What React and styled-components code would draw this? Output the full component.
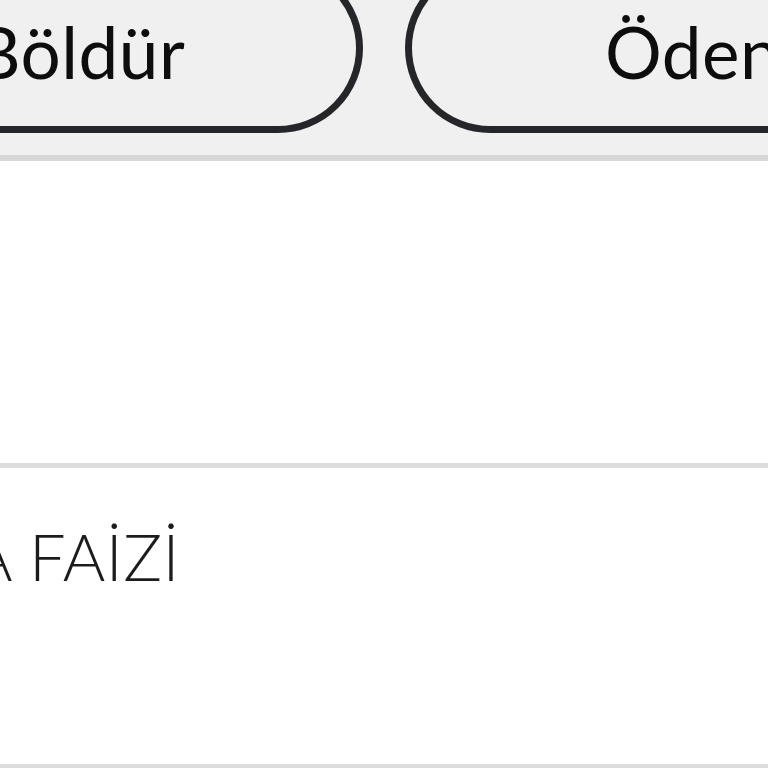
import React from "react";
import styled, { createGlobalStyle } from "styled-components";

const Global = createGlobalStyle`
  html, body { margin: 0; padding: 0; background: #ffffff; overflow: hidden; }
  body { font-family: "Lato", "Noto Sans", sans-serif; }
`;

const Page = styled.div`
  width: 768px;
  height: 768px;
  overflow: hidden;
  display: flex;
  flex-direction: column;
  background: #ffffff;
`;

const Toolbar = styled.div`
  height: 155px;
  flex-shrink: 0;
  background: #f0f0f0;
  border-bottom: 6px solid #d7d7d7;
  display: flex;
  justify-content: center;
  align-items: flex-start;
  gap: 42px;
  overflow: hidden;
`;

const PillButton = styled.button`
  flex-shrink: 0;
  width: 566px;
  height: 170px;
  margin-top: -37px;
  box-sizing: border-box;
  border: 7px solid #25262a;
  border-radius: 999px;
  background: #f0f0f0;
  color: #0d0d0d;
  font-family: "Lato", "Noto Sans", sans-serif;
  font-size: 71px;
  font-weight: 400;
  letter-spacing: 0.5px;
  display: flex;
  align-items: center;
  justify-content: ${(p) => (p.$align === "start" ? "flex-start" : "center")};
  padding: 6px 0 0 ${(p) => (p.$align === "start" ? "193px" : "0")};
  white-space: nowrap;
`;

const Row = styled.div`
  flex-shrink: 0;
  height: ${(p) => p.$h}px;
  box-sizing: border-box;
  border-bottom: 5px solid #dcdcdc;
  display: flex;
  align-items: flex-start;
  padding-top: ${(p) => p.$pt || 0}px;
`;

const Label = styled.div`
  margin-left: -30px;
  font-family: "Lato", "Noto Sans", sans-serif;
  font-weight: 300;
  font-size: 65px;
  line-height: 1;
  color: #1c1c1c;
  letter-spacing: 0.5px;
  white-space: nowrap;
`;

export default function App() {
  return (
    <>
      <Global />
      <Page>
        <Toolbar>
          <PillButton>Böldür</PillButton>
          <PillButton $align="start">Ödenme</PillButton>
        </Toolbar>
        <Row $h={307} />
        <Row $h={301} $pt={56}>
          <Label>A FAİZİ</Label>
        </Row>
      </Page>
    </>
  );
}
